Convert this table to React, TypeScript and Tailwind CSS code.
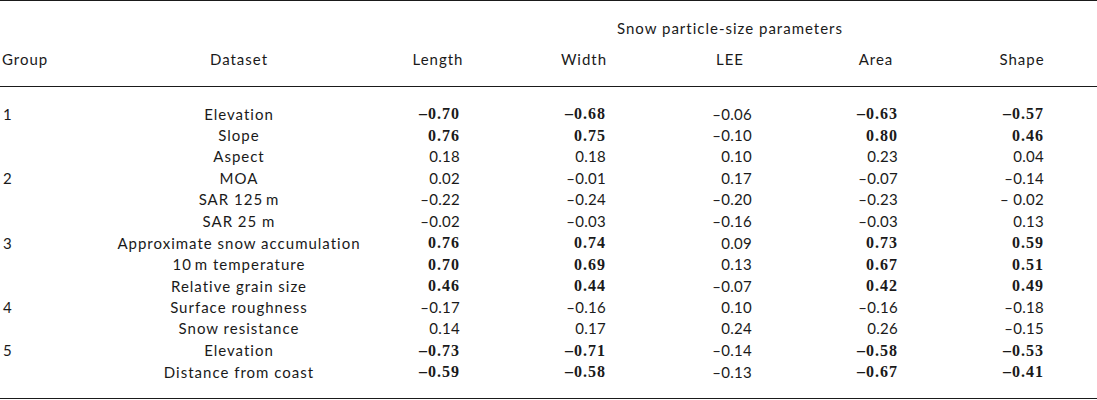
type Cell = { v: string; b?: boolean };

const rows: { group: string; name: string; cells: Cell[] }[] = [
  { group: "1", name: "Elevation", cells: [{ v: "–0.70", b: true }, { v: "–0.68", b: true }, { v: "–0.06" }, { v: "–0.63", b: true }, { v: "–0.57", b: true }] },
  { group: "", name: "Slope", cells: [{ v: "0.76", b: true }, { v: "0.75", b: true }, { v: "–0.10" }, { v: "0.80", b: true }, { v: "0.46", b: true }] },
  { group: "", name: "Aspect", cells: [{ v: "0.18" }, { v: "0.18" }, { v: "0.10" }, { v: "0.23" }, { v: "0.04" }] },
  { group: "2", name: "MOA", cells: [{ v: "0.02" }, { v: "–0.01" }, { v: "0.17" }, { v: "–0.07" }, { v: "–0.14" }] },
  { group: "", name: "SAR 125\u2009m", cells: [{ v: "–0.22" }, { v: "–0.24" }, { v: "–0.20" }, { v: "–0.23" }, { v: "– 0.02" }] },
  { group: "", name: "SAR 25 m", cells: [{ v: "–0.02" }, { v: "–0.03" }, { v: "–0.16" }, { v: "–0.03" }, { v: "0.13" }] },
  { group: "3", name: "Approximate snow accumulation", cells: [{ v: "0.76", b: true }, { v: "0.74", b: true }, { v: "0.09" }, { v: "0.73", b: true }, { v: "0.59", b: true }] },
  { group: "", name: "10\u2009m temperature", cells: [{ v: "0.70", b: true }, { v: "0.69", b: true }, { v: "0.13" }, { v: "0.67", b: true }, { v: "0.51", b: true }] },
  { group: "", name: "Relative grain size", cells: [{ v: "0.46", b: true }, { v: "0.44", b: true }, { v: "–0.07" }, { v: "0.42", b: true }, { v: "0.49", b: true }] },
  { group: "4", name: "Surface roughness", cells: [{ v: "–0.17" }, { v: "–0.16" }, { v: "0.10" }, { v: "–0.16" }, { v: "–0.18" }] },
  { group: "", name: "Snow resistance", cells: [{ v: "0.14" }, { v: "0.17" }, { v: "0.24" }, { v: "0.26" }, { v: "–0.15" }] },
  { group: "5", name: "Elevation", cells: [{ v: "–0.73", b: true }, { v: "–0.71", b: true }, { v: "–0.14" }, { v: "–0.58", b: true }, { v: "–0.53", b: true }] },
  { group: "", name: "Distance from coast", cells: [{ v: "–0.59", b: true }, { v: "–0.58", b: true }, { v: "–0.13" }, { v: "–0.67", b: true }, { v: "–0.41", b: true }] },
];

const params = ["Length", "Width", "LEE", "Area", "Shape"];

const grid = "grid grid-cols-[113px_252px_146px_146px_146px_146px_146px]";

export default function App() {
  return (
    <div className="w-[1097px] h-[400px] bg-white text-[#1a1a1a] font-['Lato',sans-serif] text-[15px] tracking-[1px]">
      <div className="border-t-[1.5px] border-[#1a1a1a]">
        {/* spanner header */}
        <div className={`${grid} h-[44px] items-center pt-[10px]`}>
          <div className="col-start-4 col-span-3 text-center whitespace-nowrap">Snow particle-size parameters</div>
        </div>
        <div className={`${grid} h-[29px] items-center`}>
          <div className="pl-[2px]">Group</div>
          <div className="text-center">Dataset</div>
          {params.map((p) => (
            <div key={p} className="text-center">
              {p}
            </div>
          ))}
        </div>
        <div className="mt-[12px] border-t border-[#1a1a1a]" />
        <div className="pt-[15px] pb-[16px]">
          {rows.map((r, i) => (
            <div key={i} className={`${grid} h-[21.5px] items-center`}>
              <div className="pl-[3px]">{r.group}</div>
              <div className="text-center whitespace-nowrap">{r.name}</div>
              {r.cells.map((c, j) => (
                <div key={j} className="text-right pr-[51px] whitespace-pre">
                  {c.b ? (
                    <span className="font-['Liberation_Serif',serif] font-bold text-[16px] tracking-[1px]">{c.v}</span>
                  ) : (
                    <span className="tracking-[0.3px]">{c.v}</span>
                  )}
                </div>
              ))}
            </div>
          ))}
        </div>
        <div className="border-t border-[#1a1a1a]" />
      </div>
    </div>
  );
}
